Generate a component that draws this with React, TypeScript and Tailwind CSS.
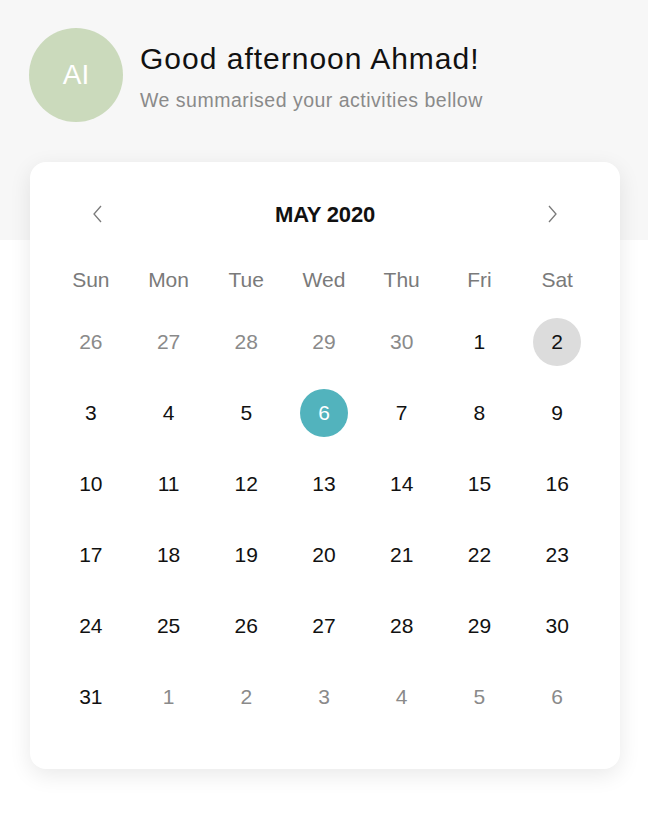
const WEEKDAYS = ['Sun', 'Mon', 'Tue', 'Wed', 'Thu', 'Fri', 'Sat'];

type Day = { n: number; muted?: boolean; state?: 'today' | 'selected' };

const DAYS: Day[] = [
  { n: 26, muted: true },
  { n: 27, muted: true },
  { n: 28, muted: true },
  { n: 29, muted: true },
  { n: 30, muted: true },
  { n: 1 },
  { n: 2, state: 'today' },
  ...Array.from({ length: 29 }, (_, i): Day => ({ n: i + 3, state: i + 3 === 6 ? 'selected' : undefined })),
  ...[1, 2, 3, 4, 5, 6].map((n): Day => ({ n, muted: true })),
];

function Chevron({ dir }: { dir: 'left' | 'right' }) {
  return (
    <svg width="12" height="20" viewBox="0 0 12 20" fill="none" stroke="#7a7a7a" strokeWidth="1.3">
      {dir === 'left' ? <polyline points="10,2 3,10 10,18" /> : <polyline points="2,2 9,10 2,18" />}
    </svg>
  );
}

export default function App() {
  return (
    <div
      className="w-[648px] h-[836px] bg-white relative overflow-hidden"
      style={{ fontFamily: '"Liberation Sans", Arial, sans-serif' }}
    >
      {/* top band */}
      <div className="bg-[#f7f7f7] h-[240px] px-[29px] pt-[28px]">
        <div className="flex items-start gap-[17px]">
          <div className="w-[94px] h-[94px] rounded-full bg-[#cbdabc] flex items-center justify-center text-white text-[28px]">
            AI
          </div>
          <div className="pt-[14px]">
            <div className="text-[30px] leading-[34px] tracking-[1px] text-[#111]">Good afternoon Ahmad!</div>
            <div className="text-[19.5px] leading-[24px] tracking-[0.5px] text-[#8a8a8a] mt-[12px]">
              We summarised your activities bellow
            </div>
          </div>
        </div>
      </div>

      {/* calendar card */}
      <div className="absolute left-[30px] top-[162px] w-[590px] bg-white rounded-[16px] shadow-[0_6px_22px_rgba(0,0,0,0.09)] pl-[22px] pr-[24px] pt-[28px] pb-[37px]">
        <div className="h-[48px] flex items-center justify-between pl-[39px] pr-[37px]">
          <Chevron dir="left" />
          <div className="text-[22px] font-bold text-[#111] tracking-[-0.2px]">MAY 2020</div>
          <Chevron dir="right" />
        </div>

        <div className="grid grid-cols-7 mt-[16px]">
          {WEEKDAYS.map((d) => (
            <div key={d} className="h-[52px] flex items-center justify-center text-[21px] text-[#7a7a7a]">
              {d}
            </div>
          ))}
          {DAYS.map((d, i) => (
            <div key={i} className="h-[71px] flex items-center justify-center">
              <div
                className={
                  'w-[48px] h-[48px] rounded-full flex items-center justify-center text-[21px] ' +
                  (d.state === 'selected'
                    ? 'bg-[#52b3bd] text-white'
                    : d.state === 'today'
                    ? 'bg-[#dcdcdc] text-[#111]'
                    : d.muted
                    ? 'text-[#8a8a8a]'
                    : 'text-[#111]')
                }
              >
                {d.n}
              </div>
            </div>
          ))}
        </div>
      </div>
    </div>
  );
}
